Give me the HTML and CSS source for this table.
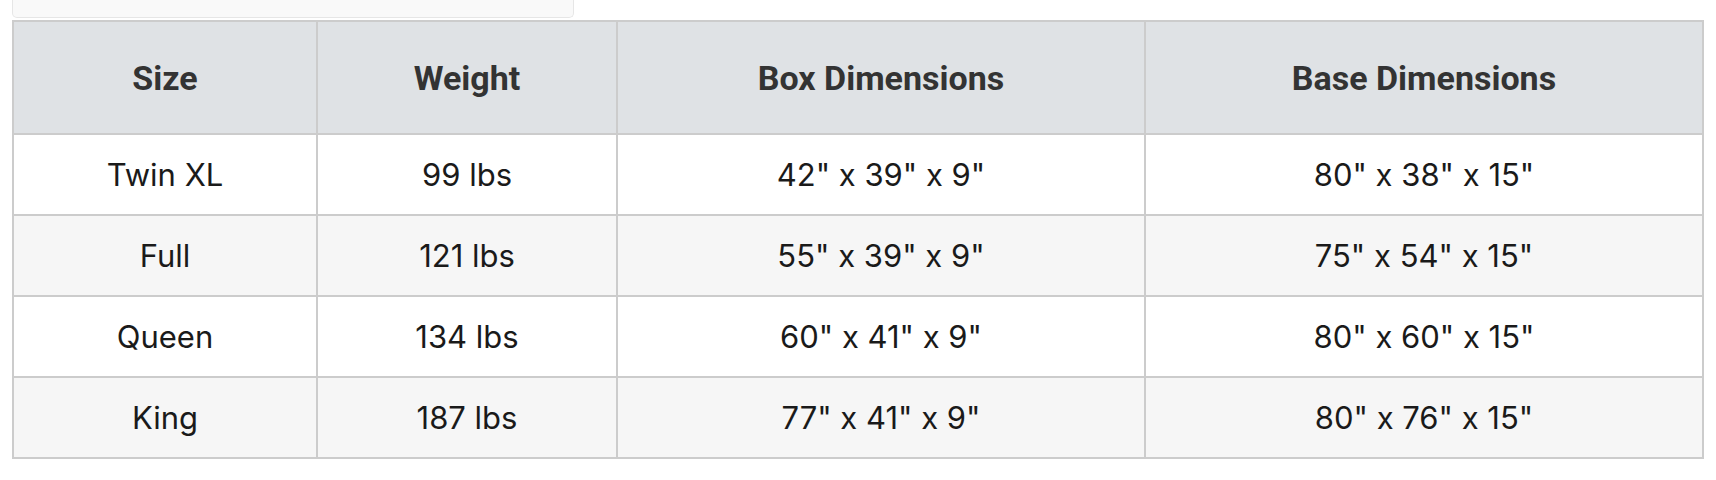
FILE: index.html
```html
<!DOCTYPE html>
<html lang="en">
<head>
<meta charset="utf-8">
<title>Size chart</title>
<link rel="stylesheet" href="styles.css">
</head>
<body>
<div class="page">
  <div class="card-tail"></div>
  <table class="specs">
    <thead>
      <tr>
        <th class="c1">Size</th>
        <th class="c2">Weight</th>
        <th class="c3">Box Dimensions</th>
        <th class="c4">Base Dimensions</th>
      </tr>
    </thead>
    <tbody>
      <tr><td>Twin XL</td><td>99 lbs</td><td>42" x 39" x 9"</td><td>80" x 38" x 15"</td></tr>
      <tr><td>Full</td><td>121 lbs</td><td>55" x 39" x 9"</td><td>75" x 54" x 15"</td></tr>
      <tr><td>Queen</td><td>134 lbs</td><td>60" x 41" x 9"</td><td>80" x 60" x 15"</td></tr>
      <tr><td>King</td><td>187 lbs</td><td>77" x 41" x 9"</td><td>80" x 76" x 15"</td></tr>
    </tbody>
  </table>
</div>
</body>
</html>
```
FILE: styles.css
```css
html, body {
  margin: 0;
  padding: 0;
  background: #ffffff;
}

.page {
  padding-left: 12px;
}

.card-tail {
  box-sizing: border-box;
  width: 562px;
  height: 18px;
  background: #f9f9f9;
  border: 1px solid #e6e6e6;
  border-top: none;
  border-radius: 0 0 5px 5px;
  margin-bottom: 2px;
}

.specs {
  border-collapse: separate;
  border-spacing: 0;
  table-layout: fixed;
  width: 1690px;
  border-left: 2px solid #cccccc;
  border-top: 2px solid #cccccc;
}

.specs th,
.specs td {
  box-sizing: border-box;
  border-right: 2px solid #cccccc;
  border-bottom: 2px solid #cccccc;
  text-align: center;
  vertical-align: middle;
  padding: 0;
}

.specs th {
  height: 113px;
  background: #dfe2e5;
  color: #333333;
  font-family: Roboto, "Liberation Sans", sans-serif;
  font-weight: 700;
  font-size: 34px;
}

.specs td {
  height: 81px;
  color: #1a1a1a;
  font-family: Inter, "Liberation Sans", sans-serif;
  font-weight: 400;
  font-size: 31px;
}

.specs tbody tr:nth-child(even) td {
  background: #f6f6f6;
}

.specs tbody tr:nth-child(odd) td {
  background: #ffffff;
}

.c1 { width: 304px; }
.c2 { width: 300px; }
.c3 { width: 528px; }
.c4 { width: 558px; }
```
